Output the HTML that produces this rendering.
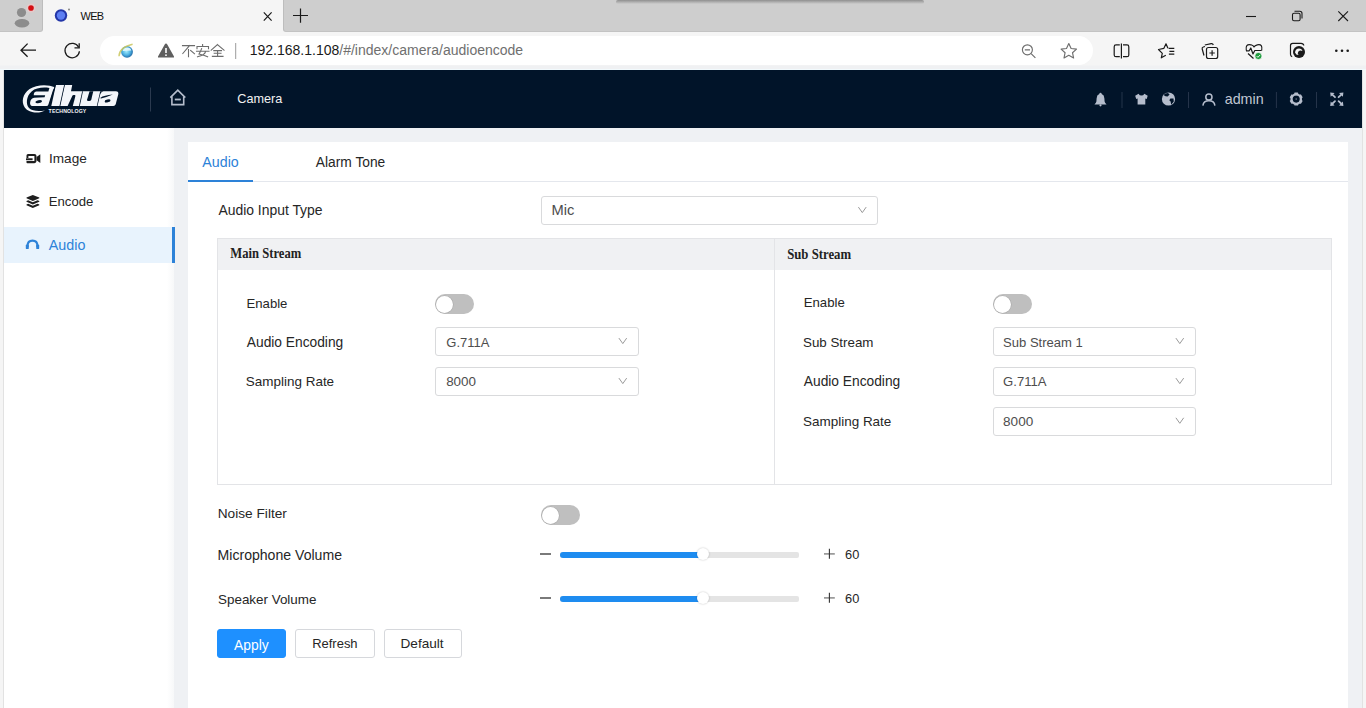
<!DOCTYPE html>
<html><head><meta charset="utf-8">
<style>
*{margin:0;padding:0;box-sizing:border-box}
html,body{width:1366px;height:708px;overflow:hidden;background:#f5f5f5;font-family:"Liberation Sans",sans-serif;position:relative}
.a{position:absolute}
.t{position:absolute;white-space:nowrap;line-height:1;font-size:14px;color:#333}
#tabstrip{left:0;top:0;width:43px;height:32px;background:#cecece;border-right:1px solid #bdbdbd;border-bottom:1px solid #c3c3c3;border-radius:0 0 3px 0}
#tabstrip2{left:283px;top:0;width:1083px;height:32px;background:#cecece;border-left:1px solid #bdbdbd;border-bottom:1px solid #c3c3c3;border-radius:0 0 0 3px}
#tab{left:43px;top:0;width:240px;height:32px;background:#f5f5f5;border-radius:4px 4px 0 0}
#addr{left:0;top:32px;width:1366px;height:38px;background:linear-gradient(#f5f5f5 0,#f5f5f5 33px,#f0f1f3 34px,#f0f1f3 36.5px,#f2fafd 37px)}
#pill{left:100px;top:36.2px;width:992.5px;height:29.3px;background:#fff;border-radius:14.6px}
#frameL{left:0;top:70px;width:4px;height:638px;background:#f5f5f5;border-right:1px solid #e2e2e2}
#frameR{left:1362px;top:70px;width:4px;height:638px;background:#f5f5f5;border-left:1px solid #e2e2e2}
#header{left:4px;top:70px;width:1358px;height:58px;background:#011429}
#pagebg{left:4px;top:128px;width:1358px;height:580px;background:#eff1f4}
#side{left:4px;top:128px;width:170px;height:580px;background:linear-gradient(90deg,#fff 0,#fff 163px,#f7f8f9 170px)}
#content{left:188px;top:142px;width:1160px;height:566px;background:#fff}
.sel{position:absolute;height:29px;border:1px solid #d9dadc;border-radius:3px;background:#fff}
.sel .v{position:absolute;left:11px;top:7px;font-size:14px;line-height:1;color:#606266;white-space:nowrap}
.sel svg{position:absolute;right:10px;top:10px}
.sw{position:absolute;width:39px;height:20px;border-radius:10px;background:#bfbfbf}
.sw:after{content:"";position:absolute;left:1px;top:1.5px;width:17px;height:17px;border-radius:50%;background:#fff;box-shadow:0 0 0 0.6px #aaa}
.btn{position:absolute;height:29px;border:1px solid #d6d8dc;border-radius:3px;background:#fff}
.hdi{position:absolute;fill:#b5bdcc}
.hdiv{position:absolute;width:1px;height:16px;background:#34435a;top:92px}
</style></head><body>
<div id="tabstrip" class="a"></div>
<div id="tabstrip2" class="a"></div>
<div id="tab" class="a"></div>
<div id="addr" class="a"></div>
<div id="pill" class="a"></div>
<div id="frameL" class="a"></div>
<div id="frameR" class="a"></div>
<div id="header" class="a"></div>
<div id="pagebg" class="a"></div>
<div id="side" class="a"></div>
<div id="content" class="a"></div>


<svg class="a" style="left:0;top:0;z-index:5" width="1366" height="708" viewBox="0 0 1366 708">
 <!-- top shadow of another window -->
 <defs>
  <linearGradient id="shd" x1="0" y1="0" x2="0" y2="1"><stop offset="0" stop-color="#8f8f8f"/><stop offset="1" stop-color="#cecece"/></linearGradient>
  <linearGradient id="ieg" x1="0" y1="0" x2="1" y2="1"><stop offset="0" stop-color="#7fd3f7"/><stop offset="1" stop-color="#1f6fc4"/></linearGradient>
 </defs>
 <rect x="616" y="0" width="308" height="4" rx="2" fill="url(#shd)"/>
 <!-- profile -->
 <circle cx="21.5" cy="12.5" r="4.6" fill="#8c8c8c"/>
 <ellipse cx="22" cy="23.2" rx="7.3" ry="4.2" fill="#8c8c8c"/>
 <circle cx="31" cy="8" r="4.6" fill="#f0c8c8" opacity=".7"/>
 <circle cx="31" cy="8" r="2.8" fill="#d40f14"/>
 <!-- reverse corners of tab -->
 <!-- favicon -->
 <circle cx="61" cy="15.5" r="6.2" fill="#2336a8"/>
 <circle cx="61" cy="15.5" r="4.2" fill="#5d7ef2"/>
 <circle cx="69" cy="9.5" r="0.9" fill="#777"/>
 <!-- tab close -->
 <path d="M263.8 12.4 L271.6 20.6 M271.6 12.4 L263.8 20.6" stroke="#1a1a1a" stroke-width="1.2" fill="none"/>
 <!-- new tab plus -->
 <path d="M293 15.5 H308 M300.5 8.5 V22.8" stroke="#1a1a1a" stroke-width="1.2" fill="none"/>
 <!-- window controls -->
 <path d="M1246 16.5 H1256" stroke="#1a1a1a" stroke-width="1.1"/>
 <rect x="1292.5" y="13.2" width="7.6" height="7.6" rx="1.5" stroke="#1a1a1a" stroke-width="1.1" fill="none"/>
 <path d="M1294.5 11.2 H1299.8 Q1302 11.2 1302 13.4 V18.5" stroke="#1a1a1a" stroke-width="1.1" fill="none"/>
 <path d="M1338.3 11.3 L1348 21 M1348 11.3 L1338.3 21" stroke="#1a1a1a" stroke-width="1.1" fill="none"/>
 <!-- back -->
 <path d="M36 50.2 H21 M27.6 43.6 L21 50.2 L27.6 56.8" stroke="#1a1a1a" stroke-width="1.3" fill="none"/>
 <!-- reload -->
 <path d="M78.6 47.2 A7.2 7.2 0 1 0 79.4 51.2" stroke="#1a1a1a" stroke-width="1.3" fill="none"/>
 <path d="M79.2 43.2 V47.9 H74.5" stroke="#1a1a1a" stroke-width="1.3" fill="none"/>
 <!-- IE icon -->
 <radialGradient id="ier" cx="0.45" cy="0.45" r="0.6"><stop offset="0" stop-color="#a6ecfb"/><stop offset="0.55" stop-color="#4fb3e3"/><stop offset="1" stop-color="#1a5f9e"/></radialGradient>
 <circle cx="127" cy="51.8" r="5.9" fill="url(#ier)"/>
 <path d="M122.6 51 Q123.5 47.6 127.2 47.6 Q130.6 47.8 131.3 50.6 Z" fill="#e9fbff" opacity=".9"/>
 <path d="M119 56.2 Q119.2 47.2 132.6 44.2" stroke="#c9c55a" stroke-width="1.4" fill="none" opacity=".85"/>
 <!-- warning -->
 <path d="M166 43.6 Q166.8 43.6 167.3 44.5 L174 56.4 Q174.4 57.6 173.2 57.6 H158.8 Q157.6 57.6 158 56.4 L164.7 44.5 Q165.2 43.6 166 43.6Z" fill="#5f5f5f"/>
 <path d="M166 48 V53" stroke="#fff" stroke-width="1.6"/>
 <circle cx="166" cy="55.2" r="0.9" fill="#fff"/>
 <!-- 不安全 -->
 <g stroke="#6c6c6c" stroke-width="1.1" fill="none" stroke-linecap="square">
  <path d="M182.5 45.6 H194.5 M189.5 45.6 L182.8 53.5 M188.5 49.5 V56.6 M190.6 50.5 L194.5 53.8"/>
  <path d="M202.6 44.6 V46.2 M197 48.8 V46.5 H208.5 V48.8 M196.5 51.2 H209 M201.6 48.6 Q200.6 51.5 199 54 Q204 55 207.6 56.8 M205.6 51.4 Q205 55.2 197.5 56.8"/>
  <path d="M217.5 44.6 L211.2 50.2 M217.5 44.6 L224 50.2 M213.8 50.6 H221.5 M214.2 53.2 H221 M217.6 50.6 V56.4 M212.4 56.4 H223"/>
 </g>
 <path d="M235.7 43 V59" stroke="#9c9c9c" stroke-width="1"/>
 <!-- right toolbar -->
 <g stroke="#6e6e6e" stroke-width="1.15" fill="none">
  <circle cx="1027.4" cy="49.8" r="5"/>
  <path d="M1024.8 49.8 H1030 M1031.1 53.6 L1035.4 57.9"/>
  <path d="M1068.8 43.5 L1071.1 48.5 L1076.5 49.1 L1072.5 52.7 L1073.6 58 L1068.8 55.3 L1064 58 L1065.1 52.7 L1061.1 49.1 L1066.5 48.5 Z" stroke-linejoin="round"/>
 </g>
 <g stroke="#1a1a1a" stroke-width="1.2" fill="none">
  <path d="M1119.8 44.9 H1116 Q1114.2 44.9 1114.2 46.7 V54.9 Q1114.2 56.7 1116 56.7 H1119.8 M1123 44.9 H1127 Q1128.8 44.9 1128.8 46.7 V54.9 Q1128.8 56.7 1127 56.7 H1123 M1121.4 43.4 V58.5"/>
  <path d="M1167.9 48.3 L1166 43.8 L1163.9 48.3 L1158.5 49.5 L1162.3 53.3 L1161.3 57.8 L1165.8 55.3" stroke-linejoin="round"/>
  <path d="M1168.6 48.4 H1174.3 M1169.4 51.3 H1174.3 M1168.9 54.2 H1174.3"/>
  <path d="M1205 46.5 L1203.3 47 Q1201.8 47.5 1202.2 49 L1204 55.5 M1204.8 45 L1211.2 43.6 Q1212.8 43.3 1213.3 45"/>
  <rect x="1206.5" y="47.5" width="11.2" height="11" rx="2"/>
  <path d="M1212.1 50.3 V55.7 M1209.4 53 H1214.8"/>
  <path d="M1246.3 50.5 Q1245 43.5 1251 44.8 Q1253.5 45.6 1254 47 Q1254.7 45.4 1257.3 44.8 Q1263 43.5 1261.7 50.5 M1246 50.8 H1249.2 L1250.8 48 L1253 54 L1254.8 50.5 H1261.5 M1248 53.5 L1253.5 58.5" stroke-linejoin="round"/>
  <path d="M1292.2 56.6 Q1290.5 56.3 1290.5 54.3 V45.5 Q1290.5 43.3 1292.7 43.3 H1301 Q1303.5 43.3 1303.8 45.5"/>
 </g>
 <circle cx="1258.4" cy="56" r="3.6" fill="#1f9d3e" stroke="#f7f7f7" stroke-width="0.8"/>
 <path d="M1256.6 56 L1257.9 57.3 L1260.3 54.8" stroke="#fff" stroke-width="0.9" fill="none"/>
 <circle cx="1299" cy="52" r="6" fill="#1a1a1a"/>
 <path d="M1295 52.5 Q1295.5 48.5 1299 48.5 Q1302 48.6 1302.4 51 Q1300 50 1298.4 51.5 Q1297 53 1298.5 55 Q1296 55 1295 52.5Z" fill="#f7f7f7"/>
 <circle cx="1336.3" cy="50.7" r="1.3" fill="#1a1a1a"/>
 <circle cx="1342" cy="50.7" r="1.3" fill="#1a1a1a"/>
 <circle cx="1347.7" cy="50.7" r="1.3" fill="#1a1a1a"/>
</svg>

<!-- tab contents -->


<svg class="a" style="left:0;top:0;z-index:5" width="1366" height="708" viewBox="0 0 1366 708">
 <!-- logo -->
 <path d="M45 110.4 C40 113.4 29 113.6 24.6 107.2 C21.2 102 22.5 94 29.6 89.1 C36 84.4 48 84.1 54.8 87.2 L53.6 89.4 C48 86.8 37 86.7 31.6 91.5 C26 96.2 25.8 104.6 29 108 C32.2 111.3 39.2 111.6 45 110.4 Z" fill="#f4f6fa"/>
 <path d="M34 93.2 Q34.5 91.6 36.4 91.6 H48.4 L49.3 88.3 Q51 86.7 54 87 L48.4 104.6 Q48 106.1 46.5 106.1 H33.4 Q29.6 106.1 30.1 102.4 Q30.7 98.4 34.2 97.8 L44.6 97.3 L45.2 95.2 H33.7 Z" fill="#f4f6fa"/>
 <ellipse cx="38.7" cy="101.6" rx="3.3" ry="1.5" transform="rotate(-12 38.7 101.6)" fill="#011429"/>
 <path d="M55.8 85 H64.6 L60 106.1 H50.2 Z" fill="#f4f6fa"/>
 <path d="M64.6 85 H72.2 L71 91.3 H115.8 Q118.8 91.3 118.3 94.2 L115.7 104.3 Q115.2 106.1 113.3 106.1 H59.9 Z" fill="#f4f6fa"/>
 <g fill="#011429">
  <path d="M64.1 85 H64.9 L60.3 106.1 H59.5 Z"/>
  <path d="M54.9 85 H55.9 L51.3 106.1 H48.6 Z"/>
  <path d="M72.5 95.4 Q72.8 94.9 73.6 94.9 H74.6 Q75.6 94.9 75.4 95.9 L72.8 106.1 H67.6 Z"/>
  <path d="M82.2 91.3 H83 L79.8 106.1 H79 Z"/>
  <path d="M89.6 91.3 H93.3 L91.3 99.6 Q90.8 101.1 89.2 101.1 H88.3 Q86.7 101.1 87.1 99.6 Z"/>
  <path d="M100.2 91.3 H103.4 Q100.6 92 100.2 94.5 L97.5 106.1 H96.8 Z"/>
  <path d="M100.2 97.9 Q104 95.3 112.8 94.6 Q108 96.8 101 98.6 Z"/>
 </g>
 <ellipse cx="107.6" cy="100.9" rx="3" ry="1.35" transform="rotate(-14 107.6 100.9)" fill="#011429"/>
 <text x="48.6" y="113.3" font-family="Liberation Sans" font-weight="bold" font-size="5.2" fill="#f4f6fa" letter-spacing="0.12">TECHNOLOGY</text>
 <!-- header divider + home -->
 <path d="M150.5 87.5 V111.5" stroke="#2b3a4f" stroke-width="1"/>
 <g stroke="#b5bdcc" stroke-width="1.6" fill="none" stroke-linejoin="miter">
  <path d="M170.3 97.6 L177.8 90.2 L185.3 97.6"/>
  <path d="M171.9 96.5 V104.6 H183.7 V96.5"/>
 </g>
 <rect x="174.8" y="98.6" width="6" height="1.8" fill="#b5bdcc"/>
 <!-- right header icons -->
 <g fill="#b5bdcc">
  <path d="M1100.5 92.8 Q1101.6 92.8 1101.7 94.1 Q1104.3 95.1 1104.4 98.5 L1104.6 101.6 Q1105 103.2 1106.4 104.3 V104.6 H1094.6 V104.3 Q1096 103.2 1096.4 101.6 L1096.6 98.5 Q1096.7 95.1 1099.3 94.1 Q1099.4 92.8 1100.5 92.8Z"/>
  <circle cx="1100.5" cy="105.3" r="1.1"/>
  <path d="M1138.6 93.7 L1135.2 95.8 L1136.2 98.9 L1137.6 98.5 V104.4 H1145.3 V98.5 L1146.7 98.9 L1147.7 95.8 L1144.3 93.7 Q1143.5 95.6 1141.45 95.6 Q1139.4 95.6 1138.6 93.7Z"/>
  <circle cx="1168.5" cy="99" r="6.6"/>
 </g>
 <path d="M1163.5 95 Q1165 93.3 1168 93.1 L1169.6 94.6 L1167.6 96.6 L1165.5 96.3 Z M1170.4 98.5 L1173.5 98.6 L1173.8 101.5 L1171.2 104.8 L1170.6 101.6 L1169.3 100.3 Z" fill="#011429"/>
 <path d="M1122 92 V108 M1188.5 92 V108 M1276.4 92 V108 M1316.5 92 V108" stroke="#25344a" stroke-width="1"/>
 <g stroke="#b5bdcc" stroke-width="1.5" fill="none">
  <circle cx="1208.9" cy="97" r="3.1"/>
  <path d="M1202.9 105.6 Q1203.5 100.8 1208.9 100.8 Q1214.3 100.8 1214.9 105.6"/>
 </g>
 <g fill="#b5bdcc"><rect x="1294.30" y="92.60" width="3.8" height="2.6" rx="0.5" transform="rotate(0 1296.2 99.1)"/><rect x="1294.30" y="92.60" width="3.8" height="2.6" rx="0.5" transform="rotate(60 1296.2 99.1)"/><rect x="1294.30" y="92.60" width="3.8" height="2.6" rx="0.5" transform="rotate(120 1296.2 99.1)"/><rect x="1294.30" y="92.60" width="3.8" height="2.6" rx="0.5" transform="rotate(180 1296.2 99.1)"/><rect x="1294.30" y="92.60" width="3.8" height="2.6" rx="0.5" transform="rotate(240 1296.2 99.1)"/><rect x="1294.30" y="92.60" width="3.8" height="2.6" rx="0.5" transform="rotate(300 1296.2 99.1)"/></g>
 <circle cx="1296.2" cy="99.1" r="4.7" stroke="#b5bdcc" stroke-width="2.3" fill="none"/>
 <circle cx="1296.2" cy="99.1" r="0.8" fill="#b5bdcc" opacity=".6"/>
 <g stroke="#b5bdcc" stroke-width="1.8" fill="none" stroke-linecap="round">
  <path d="M1332 94.3 L1335 97.2 M1341.6 94.3 L1338.6 97.2 M1332 104 L1335 101.1 M1341.6 104 L1338.6 101.1"/>
 </g>
 <g fill="#b5bdcc">
  <path d="M1330.2 92.4 L1334.6 92.9 L1330.7 96.8Z M1343.4 92.4 L1339 92.9 L1342.9 96.8Z M1330.2 105.9 L1334.6 105.4 L1330.7 101.5Z M1343.4 105.9 L1339 105.4 L1342.9 101.5Z"/>
 </g>
 <!-- sidebar icons -->
 <g fill="#1e1e1e">
  <path d="M28 153.9 H34.4 Q36.5 153.9 36.5 156 V161.1 Q36.5 163.2 34.4 163.2 H27.3 Q26.5 163.2 26.5 162.4 V161 H34.4 V156.1 H28.4 V157.9 H26.5 V155.4 Q26.5 153.9 28 153.9Z"/>
  <path d="M26 158.3 H32.6 V160.2 H26Z"/>
  <path d="M36.6 157 L40.3 154.2 V163 L36.6 160.2Z"/>
  <path d="M32.8 194.9 L39.3 197.6 V198.2 L32.8 201 L26.5 198.2 V197.6Z"/>
  <path d="M26.5 201.1 L28.2 200.2 L32.8 202.3 L37.6 200.2 L39.3 201.1 V201.8 L32.8 204.5 L26.5 201.8Z"/>
  <path d="M26.5 204.6 L28.2 203.7 L32.8 205.8 L37.6 203.7 L39.3 204.6 V205.3 L32.8 208 L26.5 205.3Z"/>
 </g>
 <path d="M27.6 247 V245.6 Q27.6 240.6 32.5 240.6 Q37.4 240.6 37.4 245.6 V247" stroke="#2d82d8" stroke-width="2.1" fill="none"/>
 <rect x="25.8" y="244.6" width="3" height="4.5" rx="0.9" fill="#2d82d8"/>
 <rect x="36.2" y="244.6" width="3" height="4.5" rx="0.9" fill="#2d82d8"/>
 <!-- select chevrons -->
 <g stroke="#9a9a9a" stroke-width="1" fill="none">
  <path d="M858.4 207.1 L862.3 212.6 L866.2 207.1"/>
  <path d="M618.9 338.1 L622.8 343.6 L626.7 338.1"/>
  <path d="M618.9 378.1 L622.8 383.6 L626.7 378.1"/>
  <path d="M1175.9 338.1 L1179.8 343.6 L1183.7 338.1"/>
  <path d="M1175.9 378.1 L1179.8 383.6 L1183.7 378.1"/>
  <path d="M1175.9 417.8 L1179.8 423.3 L1183.7 417.8"/>
 </g>
</svg>

<!-- header -->

<!-- sidebar -->
<div class="a" style="left:4px;top:227px;width:170px;height:36px;background:#e8f3fd"></div>
<div class="a" style="left:172px;top:227px;width:3px;height:36px;background:#2d82d8"></div>

<!-- content tabs -->
<div class="a" style="left:188px;top:181px;width:1160px;height:1px;background:#e4e7ed"></div>
<div class="a" style="left:188px;top:180px;width:65px;height:2px;background:#2d82d8"></div>

<div class="sel" style="left:541px;top:196px;width:337px"></div>

<!-- streams table -->
<div class="a" style="left:217px;top:238px;width:1115px;height:247px;border:1px solid #e3e4e7"></div>
<div class="a" style="left:218px;top:239px;width:1113px;height:31px;background:#f0f1f3"></div>
<div class="a" style="left:774px;top:239px;width:1px;height:245px;background:#e3e4e7"></div>

<div class="sw" style="left:435px;top:294px"></div>
<div class="sel" style="left:435px;top:327px;width:204px"></div>
<div class="sel" style="left:435px;top:367px;width:204px"></div>

<div class="sw" style="left:993px;top:294px"></div>
<div class="sel" style="left:993px;top:327px;width:203px"></div>
<div class="sel" style="left:993px;top:367px;width:203px"></div>
<div class="sel" style="left:993px;top:407px;width:203px"></div>

<!-- noise / volumes -->
<div class="sw" style="left:541px;top:505px"></div>

<div class="a" style="left:540px;top:553.2px;width:10.7px;height:1.5px;background:#7a7a7a"></div>
<svg class="a" style="left:820px;top:545px" width="20" height="18"><path d="M4 8.9 H14.8" stroke="#8a8a8a" stroke-width="1.5"/><path d="M9.4 3.7 V13.8" stroke="#333" stroke-width="1.1"/></svg>
<div class="a" style="left:560px;top:552px;width:239px;height:6px;border-radius:2px;background:#e4e4e4"></div>
<div class="a" style="left:560px;top:552px;width:143px;height:6px;border-radius:3px;background:#1e8cf0"></div>
<div class="a" style="left:697px;top:548px;width:12px;height:12px;border-radius:50%;background:#fff;box-shadow:0 0 2px rgba(0,0,0,.25)"></div>

<div class="a" style="left:540px;top:597.2px;width:10.7px;height:1.5px;background:#7a7a7a"></div>
<svg class="a" style="left:820px;top:589px" width="20" height="18"><path d="M4 8.9 H14.8" stroke="#8a8a8a" stroke-width="1.5"/><path d="M9.4 3.7 V13.8" stroke="#333" stroke-width="1.1"/></svg>
<div class="a" style="left:560px;top:596px;width:239px;height:6px;border-radius:2px;background:#e4e4e4"></div>
<div class="a" style="left:560px;top:596px;width:143px;height:6px;border-radius:3px;background:#1e8cf0"></div>
<div class="a" style="left:697px;top:592px;width:12px;height:12px;border-radius:50%;background:#fff;box-shadow:0 0 2px rgba(0,0,0,.25)"></div>

<!-- buttons -->
<div class="btn" style="left:217px;top:629px;width:69px;background:#1e90ff;border-color:#1e90ff"></div>
<div class="btn" style="left:295px;top:629px;width:80px"></div>
<div class="btn" style="left:384px;top:629px;width:78px"></div>

<div class="t" id="web" style="left:80.42px;top:10.78px;font-size:10.94px;color:#111;letter-spacing:-0.6px;">WEB</div>
<div class="t" id="url" style="left:249.65px;top:43.41px;font-size:14.02px;color:#1a1a1a;">192.168.1.108<span style="color:#6f6f6f">/#/index/camera/audioencode</span></div>
<div class="t" id="camera" style="left:237.33px;top:93.49px;font-size:12.67px;color:#f2f2f2;">Camera</div>
<div class="t" id="admin" style="left:1224.71px;top:92.23px;font-size:14.31px;color:#c0c6d2;">admin</div>
<div class="t" id="image" style="left:48.97px;top:151.74px;font-size:13.60px;color:#262626;">Image</div>
<div class="t" id="encode" style="left:48.77px;top:194.83px;font-size:13.13px;color:#262626;">Encode</div>
<div class="t" id="saudio" style="left:48.80px;top:237.85px;font-size:14.34px;color:#2d82d8;">Audio</div>
<div class="t" id="taudio" style="left:202.36px;top:155.20px;font-size:14.23px;color:#2d82d8;">Audio</div>
<div class="t" id="alarm" style="left:315.86px;top:155.65px;font-size:13.77px;color:#262626;">Alarm Tone</div>
<div class="t" id="ait" style="left:218.42px;top:203.91px;font-size:13.92px;color:#262626;">Audio Input Type</div>
<div class="t" id="mic" style="left:551.44px;top:203.23px;font-size:14.69px;color:#4d4d4d;">Mic</div>
<div class="t" id="mainh" style="left:230.36px;top:247.55px;font-size:12.62px;color:#222;font-family:'Liberation Serif',serif;font-weight:bold;transform:scaleY(1.13);transform-origin:0 90%;">Main Stream</div>
<div class="t" id="subh" style="left:787.18px;top:248.73px;font-size:12.76px;color:#222;font-family:'Liberation Serif',serif;font-weight:bold;transform:scaleY(1.13);transform-origin:0 90%;">Sub Stream</div>
<div class="t" id="en1" style="left:246.53px;top:296.70px;font-size:13.15px;color:#262626;">Enable</div>
<div class="t" id="ae1" style="left:246.80px;top:335.62px;font-size:13.78px;color:#262626;">Audio Encoding</div>
<div class="t" id="sr1" style="left:245.77px;top:374.74px;font-size:13.48px;color:#262626;">Sampling Rate</div>
<div class="t" id="g1" style="left:446.36px;top:336.07px;font-size:12.99px;color:#4d4d4d;">G.711A</div>
<div class="t" id="r1" style="left:446.15px;top:374.89px;font-size:13.41px;color:#4d4d4d;">8000</div>
<div class="t" id="en2" style="left:803.74px;top:296.36px;font-size:13.16px;color:#262626;">Enable</div>
<div class="t" id="ss2" style="left:803.00px;top:336.36px;font-size:13.35px;color:#262626;">Sub Stream</div>
<div class="t" id="ae2" style="left:803.80px;top:375.27px;font-size:13.78px;color:#262626;">Audio Encoding</div>
<div class="t" id="sr2" style="left:803.00px;top:415.39px;font-size:13.48px;color:#262626;">Sampling Rate</div>
<div class="t" id="ss1v" style="left:1003.09px;top:335.89px;font-size:13.06px;color:#4d4d4d;">Sub Stream 1</div>
<div class="t" id="g2" style="left:1003.09px;top:374.66px;font-size:13.12px;color:#4d4d4d;">G.711A</div>
<div class="t" id="r2" style="left:1003.09px;top:414.54px;font-size:13.56px;color:#4d4d4d;">8000</div>
<div class="t" id="nf" style="left:217.74px;top:506.83px;font-size:13.68px;color:#262626;">Noise Filter</div>
<div class="t" id="mv" style="left:217.56px;top:548.15px;font-size:14.09px;color:#262626;">Microphone Volume</div>
<div class="t" id="sv" style="left:218.06px;top:592.83px;font-size:13.42px;color:#262626;">Speaker Volume</div>
<div class="t" id="v1" style="left:845.12px;top:549.13px;font-size:12.81px;color:#262626;">60</div>
<div class="t" id="v2" style="left:845.12px;top:593.13px;font-size:12.81px;color:#262626;">60</div>
<div class="t" id="apply" style="left:234.12px;top:638.72px;font-size:13.83px;color:#fff;">Apply</div>
<div class="t" id="refresh" style="left:312.18px;top:637.12px;font-size:12.98px;color:#262626;">Refresh</div>
<div class="t" id="default" style="left:400.53px;top:637.12px;font-size:13.62px;color:#262626;">Default</div>
</body></html>
